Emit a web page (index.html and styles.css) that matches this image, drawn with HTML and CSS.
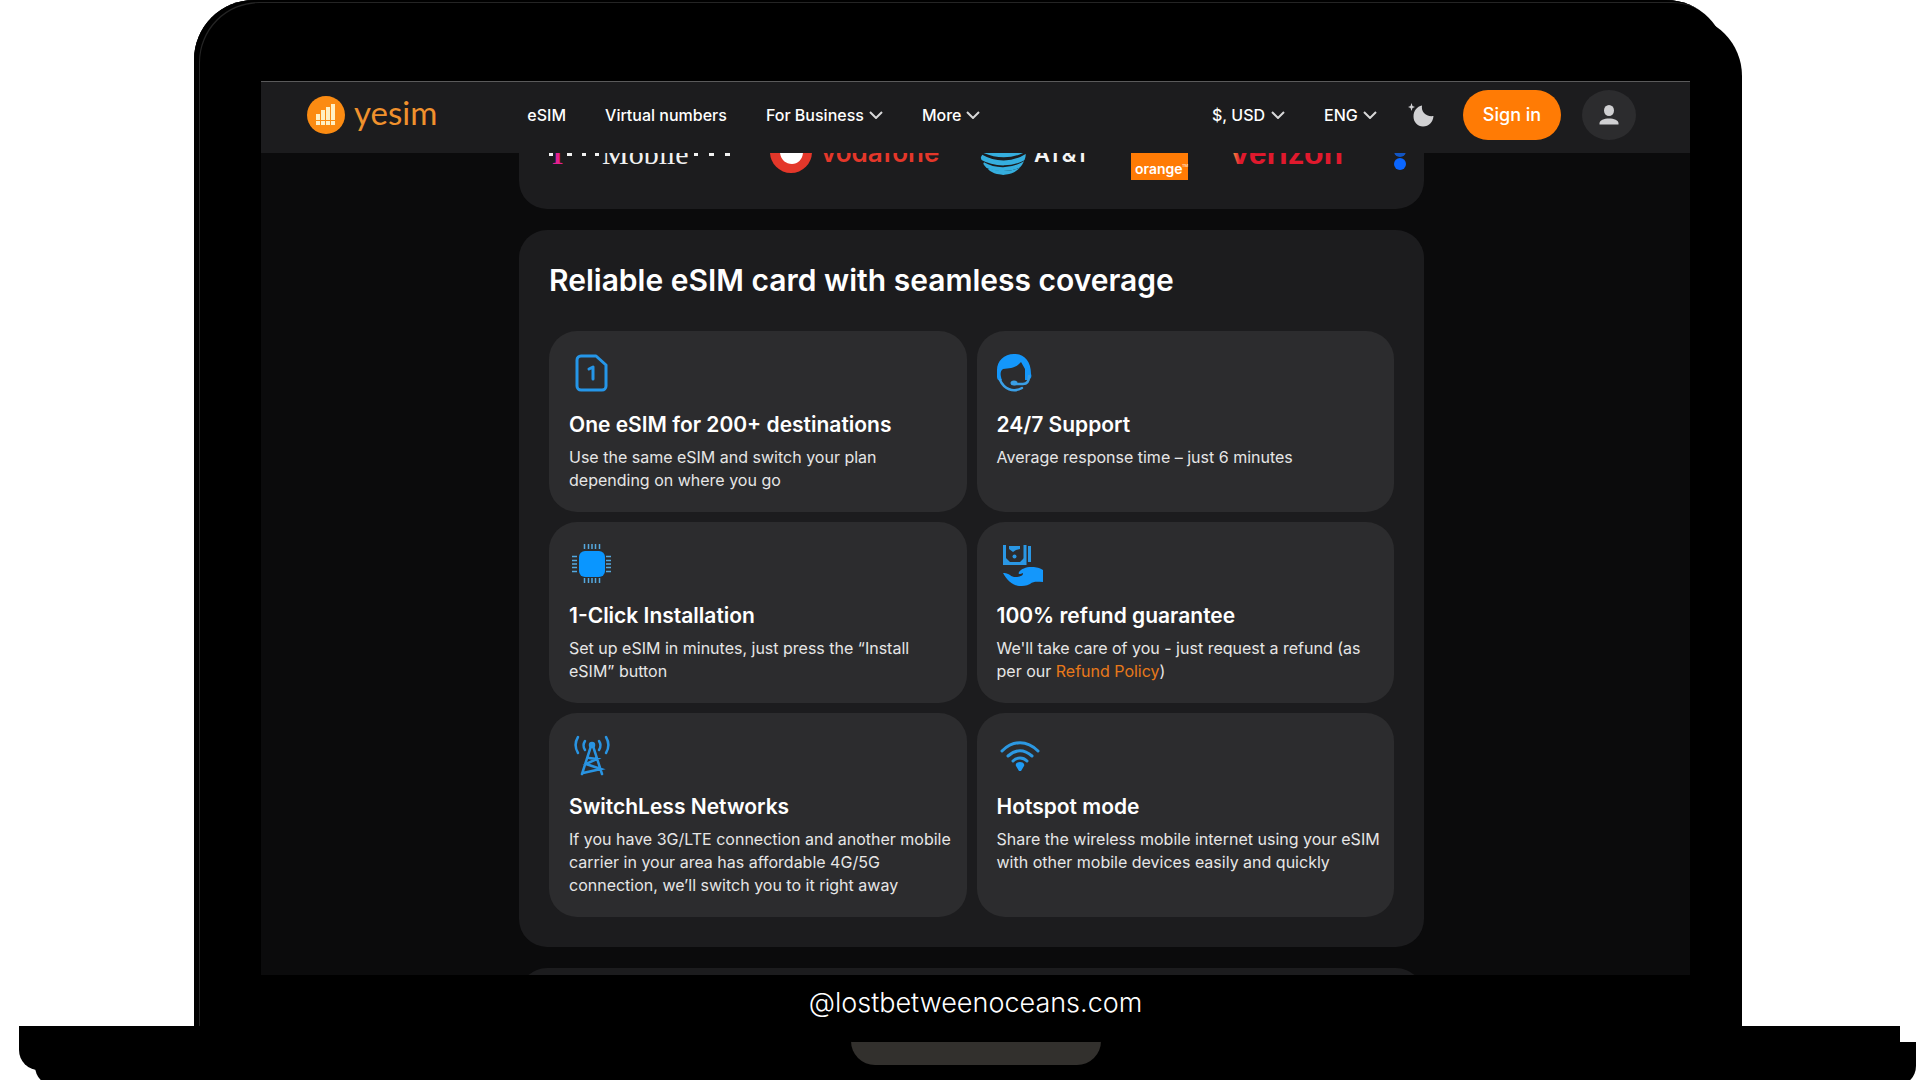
FILE: index.html
```html
<!DOCTYPE html>
<html lang="en">
<head>
  <meta charset="UTF-8" />
  <meta name="viewport" content="width=device-width, initial-scale=1" />
  <title>Yesim</title>
  <link rel="stylesheet" href="styles.css">
</head>
<body>
  <div class="lid">
    <div class="screen">
      <header class="header">
        <a class="logo" href="#">
          <svg width="38" height="38" viewBox="0 0 38 38">
            <circle cx="19" cy="19" r="19" fill="#fb8b12"/>
            <g fill="#fff0c4">
              <path d="M9 18h4v6H9zM14 14h4v10h-4zM19 11h4v13h-4zM24 8h4v16h-4z"/>
              <path d="M9 25h4v4H9zM14 25h4v4h-4zM19 25h4v4h-4zM24 25h4v4h-4z"/>
            </g>
          </svg>
          <span>yesim</span>
        </a>
        <nav class="nav">
          <a href="#">eSIM</a>
          <a href="#">Virtual numbers</a>
          <button type="button">For Business <svg class="chevron" viewBox="0 0 14 8"><path d="M1 1l6 6 6-6"/></svg></button>
          <button type="button">More <svg class="chevron" viewBox="0 0 14 8"><path d="M1 1l6 6 6-6"/></svg></button>
        </nav>
        <div class="tools">
          <label class="picker">
            <select aria-label="Currency"><option>$, USD</option></select>
            <svg class="chevron" viewBox="0 0 14 8"><path d="M1 1l6 6 6-6"/></svg>
          </label>
          <label class="picker">
            <select aria-label="Language"><option>ENG</option></select>
            <svg class="chevron" viewBox="0 0 14 8"><path d="M1 1l6 6 6-6"/></svg>
          </label>
          <button type="button" class="theme" aria-label="Dark theme">
            <svg width="26" height="24" viewBox="0 0 26 24">
              <path fill="#d0d0d2" d="M14 2.500C13 9 18 14 25.500 13C25 19 21 23.500 15 23.500C9.500 23.500 5.500 19 5.500 13.500C5.500 8 9 3.500 14 2.500z"/>
              <path fill="#d0d0d2" d="M3.500 0l1 3 2.500 1-2.500 1-1 3-1-3L0 4l2.500-1z"/>
            </svg>
          </button>
          <button type="button" class="sign-in">Sign in</button>
          <button type="button" class="user" aria-label="Account">
            <svg width="20" height="20" viewBox="0 0 20 20" fill="#d0d0d2">
              <ellipse cx="10" cy="5.500" rx="5" ry="5.500"/>
              <path d="M0.500 19.500v-1C0.500 15 5 13.500 10 13.500s9.500 1.500 9.500 5v1z"/>
            </svg>
          </button>
        </div>
      </header>

      <main class="content">
        <section class="carriers">
          <svg width="178" height="50">
            <text class="serif" x="0" y="34" font-size="26" font-weight="700" fill="#e2218f">T</text>
            <g fill="#f1f1f1"><path d="M0 22h4v4h-4zM18 22h5v4h-5zM33 22h4v4h-4zM46 22h4v4h-4zM145 22h4v4h-4zM160 22h5v4h-5zM176 22h5v4h-5z"/></g>
            <text class="serif" x="53" y="34" font-size="30" fill="#f1f1f1">Mobile</text>
          </svg>
          <svg width="168" height="50">
            <circle cx="21" cy="22" r="21" fill="#e4372a"/>
            <path d="M25 2C14 7 9 15 10 23c1 7 6 11 12 11s11-5 11-12c0-6-4-9-10-11 0-4 1-7 2-9z" fill="#fff"/>
            <text x="51" y="32" font-size="26" font-weight="600" fill="#e4372a">vodafone</text>
          </svg>
          <svg width="107" height="50">
            <defs><clipPath id="globe"><circle cx="22" cy="22" r="23"/></clipPath></defs>
            <g clip-path="url(#globe)" fill="none" stroke="#35aede">
              <path stroke-width="5" d="M-2 10c16 8 34 8 48 0"/>
              <path stroke-width="5" d="M-2 18c16 9 34 9 48 0"/>
              <path stroke-width="5" d="M0 27c14 8 32 8 46-1"/>
              <path stroke-width="4" d="M2 34c12 7 28 7 42-1"/>
              <path stroke-width="4" d="M7 40c10 4 22 4 34-1"/>
            </g>
            <text x="53" y="32" font-size="22" font-weight="600" fill="#f5f5f5">AT&amp;T</text>
          </svg>
          <svg width="57" height="50">
            <path d="M0 0h57v50H0z" fill="#ff7b05"/>
            <text x="4" y="44" font-size="14" font-weight="600" fill="#fff">orange</text>
            <text x="51" y="37" font-size="4" fill="#fff">TM</text>
          </svg>
          <svg width="113" height="50">
            <defs><linearGradient id="spark"><stop offset="0" stop-color="#ffb347"/><stop offset="0.080" stop-color="#e0192d"/></linearGradient></defs>
            <text class="sans" x="0" y="34" font-size="32" font-weight="700" fill="url(#spark)">verizon</text>
          </svg>
          <svg width="20" height="50">
            <circle cx="13" cy="21" r="6" fill="#1255c4"/>
            <circle cx="13" cy="34" r="6" fill="#0a66ff"/>
          </svg>
        </section>

        <section class="features">
          <h1>Reliable eSIM card with seamless coverage</h1>
          <div class="grid">
            <article class="card">
              <svg class="icon" viewBox="0 0 42 42" fill="none" stroke="#2596e8">
                <path stroke-width="3" stroke-linejoin="round" d="M12 5h15l10 9v21a4 4 0 0 1-4 4H12a4 4 0 0 1-4-4V9a4 4 0 0 1 4-4z"/>
                <path stroke-width="3" stroke-linecap="round" stroke-linejoin="round" d="M20 18l4-2v12"/>
              </svg>
              <h2>One eSIM for 200+ destinations</h2>
              <p>Use the same eSIM and switch your plan depending on where you go</p>
            </article>
            <article class="card">
              <svg class="icon" viewBox="0 0 42 42">
                <path fill="#1497fb" d="M17 3C7 3 0 10 0 19v7c0 2 1 3 3 4l2-1c-2-5-2-9 1-11 6-1 12-1 16-5l2-2 4 7v11h3c3-1 4-3 3-6C34 10 27 3 17 3z"/>
                <path fill="none" stroke="#3a9fe6" stroke-width="2.500" stroke-linecap="round" d="M3 29c4 9 13 13 22 8M32 25c0 6-2 8-6 8h-9"/>
                <ellipse cx="17" cy="32" rx="3.500" ry="2.500" fill="#3a9fe6"/>
              </svg>
              <h2>24/7 Support</h2>
              <p>Average response time – just 6 minutes</p>
            </article>
            <article class="card">
              <svg class="icon" viewBox="0 0 42 42">
                <rect x="10" y="9" width="26" height="26" rx="6" fill="#0a96ff"/>
                <path stroke="#55a9df" stroke-width="1.500" d="M15.500 2v5M19.500 2v5M23 2v5M26.500 2v5M30.500 2v5M15.500 36v5M19.500 36v5M23 36v5M26.500 36v5M30.500 36v5M3 14.500h5M3 18.500h5M3 22h5M3 25.500h5M3 29.500h5M37 14.500h5M37 18.500h5M37 22h5M37 25.500h5M37 29.500h5"/>
              </svg>
              <h2>1-Click Installation</h2>
              <p>Set up eSIM in minutes, just press the “Install eSIM” button</p>
            </article>
            <article class="card">
              <svg class="icon" viewBox="0 0 42 42">
                <path fill="none" stroke="#2a97e4" stroke-width="3" d="M7.500 3v18.500h20.500V3M32.500 4v16"/>
                <path fill="#2a97e4" d="M8 15l6 6h-6zM28 15l-6 6h6zM12 4h11v3l-4 1-3 2-4-3z"/>
                <circle cx="17.500" cy="14.500" r="2" fill="#2a97e4"/>
                <path fill="#1497fb" d="M6 31c6-1 8 5 14 4 4-1 6-1 6-4-4 2-5 1-4-1 2-3 7-5 12-5 4 0 7 0 12 3v12c-6 0-9-1-13 2-4 2-7 2-11 2-7-1-12-6-16-13z"/>
              </svg>
              <h2>100% refund guarantee</h2>
              <p>We'll take care of you - just request a refund (as per our <a href="#">Refund Policy</a>)</p>
            </article>
            <article class="card">
              <svg class="icon" viewBox="0 0 42 42" fill="none" stroke="#2994e2" stroke-width="2.500" stroke-linecap="round">
                <circle cx="23" cy="12" r="2" fill="#2994e2"/>
                <path d="M22 13L13 41M24 13l9 28M20 25l8 1-11 5 15 5-18 4"/>
                <path d="M16 8c-2 3-2 6 0 9M30 8c2 3 2 6 0 9M9 4c-3 5-3 11 0 16M37 4c3 5 3 11 0 16"/>
              </svg>
              <h2>SwitchLess Networks</h2>
              <p>If you have 3G/LTE connection and another mobile carrier in your area has affordable 4G/5G connection, we’ll switch you to it right away</p>
            </article>
            <article class="card">
              <svg class="icon" viewBox="0 0 42 42" fill="none" stroke="#2c98e2" stroke-width="3" stroke-linecap="round">
                <path d="M5 18c11-11 25-11 36 0M11 23c8-7 16-7 24 0M16 28c4-4 10-4 14 0"/>
                <path fill="#1f9bf5" stroke="none" d="M23 29c3 0 5 2 4 4l-3 5h-2l-3-5c-1-2 1-4 4-4z"/>
              </svg>
              <h2>Hotspot mode</h2>
              <p>Share the wireless mobile internet using your eSIM with other mobile devices easily and quickly</p>
            </article>
          </div>
        </section>

        <section class="next"></section>
      </main>
    </div>
    <p class="caption">@lostbetweenoceans.com</p>
  </div>
  <div class="base"><div class="notch"></div></div>
</body>
</html>
```
FILE: styles.css
```css
* {
  box-sizing: border-box;
}
body {
  margin: 0;
  height: 100vh;
  overflow: hidden;
  display: flex;
  flex-direction: column;
  background: #fff;
  color: #fff;
  font-family: Inter, "Liberation Sans", sans-serif;
}
h1, h2, p {
  margin: 0;
}
a {
  color: inherit;
  text-decoration: none;
}
button, select {
  padding: 0;
  border: 0;
  background: none;
  color: inherit;
  font: inherit;
}

/* laptop */
.lid {
  flex: 1;
  min-height: 0;
  display: flex;
  flex-direction: column;
  margin: 0 194px;
  padding: 81px 36px 0 67px;
  background: #000;
  border-radius: 60px 60px 0 0;
  box-shadow: 16px 16px 0 #000, inset 5px 2px 0 #000, inset 6px 3px 0 #242424;
}
.screen {
  flex: 1;
  min-height: 0;
  display: flex;
  flex-direction: column;
  background: #0b0b0c;
  border-top: 1px solid #5a5a5b;
  overflow: hidden;
}
.caption {
  padding: 10px 0 6px;
  text-align: center;
  font-size: 27px;
  font-weight: 300;
  line-height: 35px;
}
.base {
  height: 54px;
  flex: none;
  position: relative;
  margin: 0 20px 0 19px;
}
.base::before, .base::after {
  content: "";
  position: absolute;
  z-index: -1;
  width: 100%;
  height: 44px;
  background: #000;
  border-radius: 0 0 20px 20px;
}
.base::after {
  top: 16px;
  left: 16px;
}
.notch {
  width: 250px;
  height: 39px;
  margin: 0 auto;
  border-top: 16px solid #000;
  background: #32302d;
  border-radius: 0 0 24px 24px;
  position: relative;
  left: 16px;
}

/* header */
.header {
  flex: none;
  display: flex;
  align-items: center;
  height: 71px;
  padding: 0 54px 6px 46px;
  background: #1c1c1e;
  font-size: 16px;
  font-weight: 500;
}
.logo {
  display: flex;
  align-items: center;
  gap: 9px;
  color: #f0912d;
  font-family: Lato, sans-serif;
  font-size: 33px;
  font-weight: 400;
  line-height: 38px;
}
.logo span {
  padding-bottom: 6px;
}
.nav {
  display: flex;
  gap: 39px;
  margin-left: 90px;
}
.nav button, .picker {
  display: flex;
  align-items: center;
  gap: 5px;
}
.chevron {
  width: 14px;
  height: 8px;
  fill: none;
  stroke: #d8d8d8;
  stroke-width: 2;
}
.tools {
  display: flex;
  align-items: center;
  margin-left: auto;
}
.picker {
  margin-right: 39px;
}
.picker select {
  appearance: none;
}
.picker + .theme {
  margin-left: -8px;
}
.theme {
  display: flex;
  margin-right: 29px;
}
.sign-in {
  width: 98px;
  height: 50px;
  border-radius: 25px;
  background: #ff7b05;
  font-size: 18px;
}
.user {
  display: grid;
  place-items: center;
  width: 54px;
  height: 50px;
  margin-left: 21px;
  border-radius: 50%;
  background: #2c2c2e;
}

/* page */
.content {
  flex: 1;
  min-height: 0;
  overflow: hidden;
  display: flex;
  flex-direction: column;
  align-items: center;
  gap: 21px;
  padding-right: 8px;
}
.carriers, .features, .next {
  flex: none;
  width: 100%;
  max-width: 905px;
  border-radius: 28px;
  background: #1c1c1e;
}
.carriers {
  display: flex;
  gap: 43px;
  margin-top: -53px;
  padding: 30px 30px 29px;
  overflow: hidden;
}
.carriers svg {
  flex: none;
  overflow: visible;
}
.serif {
  font-family: "Liberation Serif", serif;
}
.sans {
  font-family: "Liberation Sans", sans-serif;
}
.features {
  padding: 30px;
}
.features h1 {
  margin-bottom: 31px;
  font-size: 30px;
  font-weight: 600;
  line-height: 40px;
}
.grid {
  display: grid;
  grid-template-columns: 1fr 1fr;
  gap: 10px;
}
.card {
  padding: 20px 10px 20px 20px;
  border-radius: 28px;
  background: #2c2c2e;
}
.icon {
  display: block;
  width: 42px;
  height: 42px;
  margin-bottom: 18px;
  overflow: visible;
}
.card h2 {
  margin-bottom: 7px;
  font-size: 21px;
  font-weight: 600;
  line-height: 28px;
}
.card p {
  color: #e6e6e6;
  font-size: 16px;
  line-height: 23px;
}
.card a {
  color: #e8791a;
}
.next {
  height: 200px;
}
```
